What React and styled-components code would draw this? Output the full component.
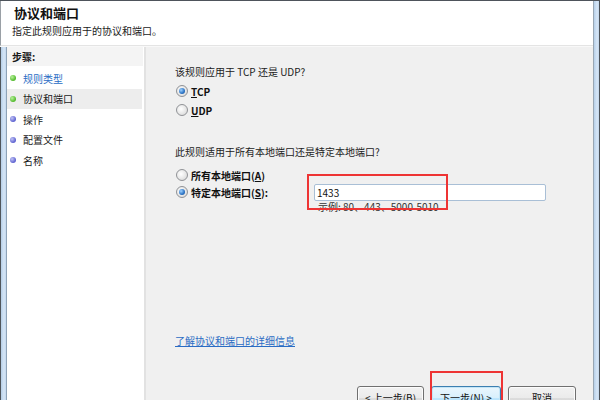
import React from "react";
import styled, { createGlobalStyle } from "styled-components";

const Global = createGlobalStyle`
  html, body { margin: 0; padding: 0; background: #f0f0f0; }
  body { font-family: "Noto Sans CJK SC", "Noto Sans", sans-serif; }
`;

const Window = styled.div`
  width: 600px;
  height: 400px;
  overflow: hidden;
  display: flex;
  box-sizing: border-box;
  border-top: 1px solid #4e545b;
  background: #f0f0f0;
  color: #1a1a1a;
  font-size: 10px;
`;

const Content = styled.div`
  flex: 1;
  display: flex;
  flex-direction: column;
  min-width: 0;
`;

const Frame = styled.div`
  flex: 0 0 7px;
  box-sizing: border-box;
  background: linear-gradient(to right, #b6cfe8, #d6e6f7 60%, #c3d7ec);
  border-left: 1px solid ${(p) => (p.$side === "left" ? "#50565c" : "#98a6b4")};
  border-right: 1px solid ${(p) => (p.$side === "left" ? "#8ea3b8" : "#4a5057")};
`;

const Header = styled.div`
  height: 45px;
  flex: 0 0 45px;
  box-sizing: border-box;
  background: #fff;
  border-left: 1px solid #9aa0a6;
  border-bottom: 1px solid #e4e4e4;
  padding: 4px 0 0 11px;
`;

const Title = styled.div`
  font-size: 13px;
  font-weight: 700;
  line-height: 16px;
  margin-left: 2px;
  color: #111;
`;

const Subtitle = styled.div`
  font-size: 10px;
  line-height: 14px;
  margin-top: 3px;
  color: #222;
`;

const Body = styled.div`
  flex: 1;
  display: flex;
  border-top: 1px solid #f8f8f8;
  min-height: 0;
`;

const Sidebar = styled.div`
  width: 137px;
  flex: 0 0 137px;
  background: #fff;
  border-right: 2px solid #e2e2e2;
  display: flex;
  flex-direction: column;
`;

const StepsHead = styled.div`
  height: 19px;
  line-height: 19px;
  padding-left: 5px;
  margin-right: 1px;
  font-weight: 700;
  font-size: 10px;
  background: #f4f4f4;
  margin-bottom: 2px;
`;

const StepRow = styled.div`
  height: 20.5px;
  display: flex;
  align-items: center;
  gap: 7px;
  padding-left: 3px;
  margin-right: 2px;
  background: ${(p) => (p.$active ? "#ededed" : "transparent")};
  color: ${(p) => (p.$link ? "#2a6cc4" : "#1a1a1a")};
  font-size: 10px;
`;

const Bullet = styled.span`
  width: 6px;
  height: 6px;
  border-radius: 50%;
  flex: 0 0 6px;
  background: ${(p) =>
    p.$done
      ? "radial-gradient(circle at 35% 35%, #b9f29c, #4fb82a 70%)"
      : "radial-gradient(circle at 35% 35%, #c2c4f5, #5a5fcf 70%)"};
`;

const Main = styled.div`
  flex: 1;
  position: relative;
  display: flex;
  flex-direction: column;
  padding: 18px 17px 0 29px;
  min-width: 0;
`;

const Question = styled.div`
  line-height: 14px;
  font-size: 10px;
  margin-top: ${(p) => p.$mt || 0}px;
  color: #222;
`;

const OptionGroup = styled.div`
  display: flex;
  flex-direction: column;
  margin-top: ${(p) => p.$mt || 0}px;
`;

const OptionRow = styled.div`
  display: flex;
  align-items: center;
  height: ${(p) => p.$h}px;
  padding-left: 1px;
`;

const RadioLabel = styled.label`
  display: flex;
  align-items: center;
  gap: 3px;
  width: ${(p) => (p.$w ? `${p.$w}px` : "auto")};
  flex: 0 0 auto;
  font-weight: 700;
  font-size: 10px;
  color: #111;
`;

const Radio = styled.span`
  width: 12px;
  height: 12px;
  box-sizing: border-box;
  border-radius: 50%;
  border: 1px solid #909296;
  background: radial-gradient(circle at 40% 40%, #ffffff, #dcdcdc 80%);
  display: flex;
  align-items: center;
  justify-content: center;
  &::after {
    content: "";
    width: 6px;
    height: 6px;
    border-radius: 50%;
    display: ${(p) => (p.$checked ? "block" : "none")};
    background: radial-gradient(circle at 35% 35%, #9fd2ff, #2a72c4 60%, #1d4f8f);
  }
`;

const U = styled.span`
  text-decoration: underline;
`;

const PortInput = styled.div`
  width: 232px;
  height: 17px;
  box-sizing: border-box;
  border: 1px solid #a9bfd6;
  border-radius: 2px;
  background: #fff;
  font-size: 10px;
  line-height: 15px;
  padding-left: 2px;
  color: #111;
`;

const Example = styled.div`
  margin-left: 143px;
  line-height: 12px;
  font-size: 10px;
  color: #333;
`;

const Link = styled.a`
  margin-top: 121px;
  line-height: 14px;
  font-size: 10px;
  color: #2a6cc4;
  text-decoration: underline;
  align-self: flex-start;
`;

const ButtonBar = styled.div`
  display: flex;
  justify-content: flex-end;
  gap: 7px;
  margin-top: 38px;
`;

const Button = styled.div`
  width: ${(p) => p.$w}px;
  height: 23px;
  box-sizing: border-box;
  border-radius: 3px;
  border: 1px solid ${(p) => (p.$default ? "#3c7fb1" : "#707070")};
  background: ${(p) =>
    p.$default
      ? "linear-gradient(#eaf6fd, #d9f0fc 50%, #bee6fd 51%, #a7d9f5)"
      : "linear-gradient(#f2f2f2, #ebebeb 50%, #dddddd 51%, #cfcfcf)"};
  box-shadow: inset 0 0 0 1px ${(p) => (p.$default ? "#c4e5f6" : "#fcfcfc")};
  display: flex;
  align-items: center;
  justify-content: center;
  font-size: 10px;
  color: #111;
  white-space: pre;
`;

const Mark = styled.div`
  position: absolute;
  left: ${(p) => p.$x}px;
  top: ${(p) => p.$y}px;
  width: ${(p) => p.$w}px;
  height: ${(p) => p.$h}px;
  box-sizing: border-box;
  border: 2px solid #ee3434;
  pointer-events: none;
`;

const steps = [
  { label: "规则类型", done: true, link: true },
  { label: "协议和端口", done: true, active: true },
  { label: "操作" },
  { label: "配置文件" },
  { label: "名称" },
];

export default function App() {
  return (
    <>
      <Global />
      <Window>
        <Content>
          <Header>
            <Title>协议和端口</Title>
            <Subtitle>指定此规则应用于的协议和端口。</Subtitle>
          </Header>
          <Body>
            <Frame $side="left" />
            <Sidebar>
              <StepsHead>步骤:</StepsHead>
              {steps.map((s) => (
                <StepRow key={s.label} $active={s.active} $link={s.link}>
                  <Bullet $done={s.done} />
                  {s.label}
                </StepRow>
              ))}
            </Sidebar>
            <Main>
              <Question>该规则应用于 TCP 还是 UDP?</Question>
              <OptionGroup $mt={2.5}>
                <OptionRow $h={19}>
                  <RadioLabel>
                    <Radio $checked />
                    <span><U>T</U>CP</span>
                  </RadioLabel>
                </OptionRow>
                <OptionRow $h={19}>
                  <RadioLabel>
                    <Radio />
                    <span><U>U</U>DP</span>
                  </RadioLabel>
                </OptionRow>
              </OptionGroup>
              <Question $mt={25.5}>此规则适用于所有本地端口还是特定本地端口?</Question>
              <OptionGroup $mt={7.5}>
                <OptionRow $h={17}>
                  <RadioLabel>
                    <Radio />
                    <span>所有本地端口(<U>A</U>)</span>
                  </RadioLabel>
                </OptionRow>
                <OptionRow $h={17}>
                  <RadioLabel $w={138}>
                    <Radio $checked />
                    <span>特定本地端口(<U>S</U>):</span>
                  </RadioLabel>
                  <PortInput>1433</PortInput>
                </OptionRow>
              </OptionGroup>
              <Example>示例: 80、443、5000-5010</Example>
              <Link href="#">了解协议和端口的详细信息</Link>
              <ButtonBar>
                <Button $w={67}>{"< 上一步("}<U>B</U>{")"}</Button>
                <Button $w={70} $default>{"下一步("}<U>N</U>{") >"}</Button>
                <Button $w={68}>取消</Button>
              </ButtonBar>
              <Mark $x={161} $y={127} $w={141} $h={36} />
              <Mark $x={284} $y={324} $w={73} $h={40} />
            </Main>
          </Body>
        </Content>
        <Frame $side="right" />
      </Window>
    </>
  );
}
